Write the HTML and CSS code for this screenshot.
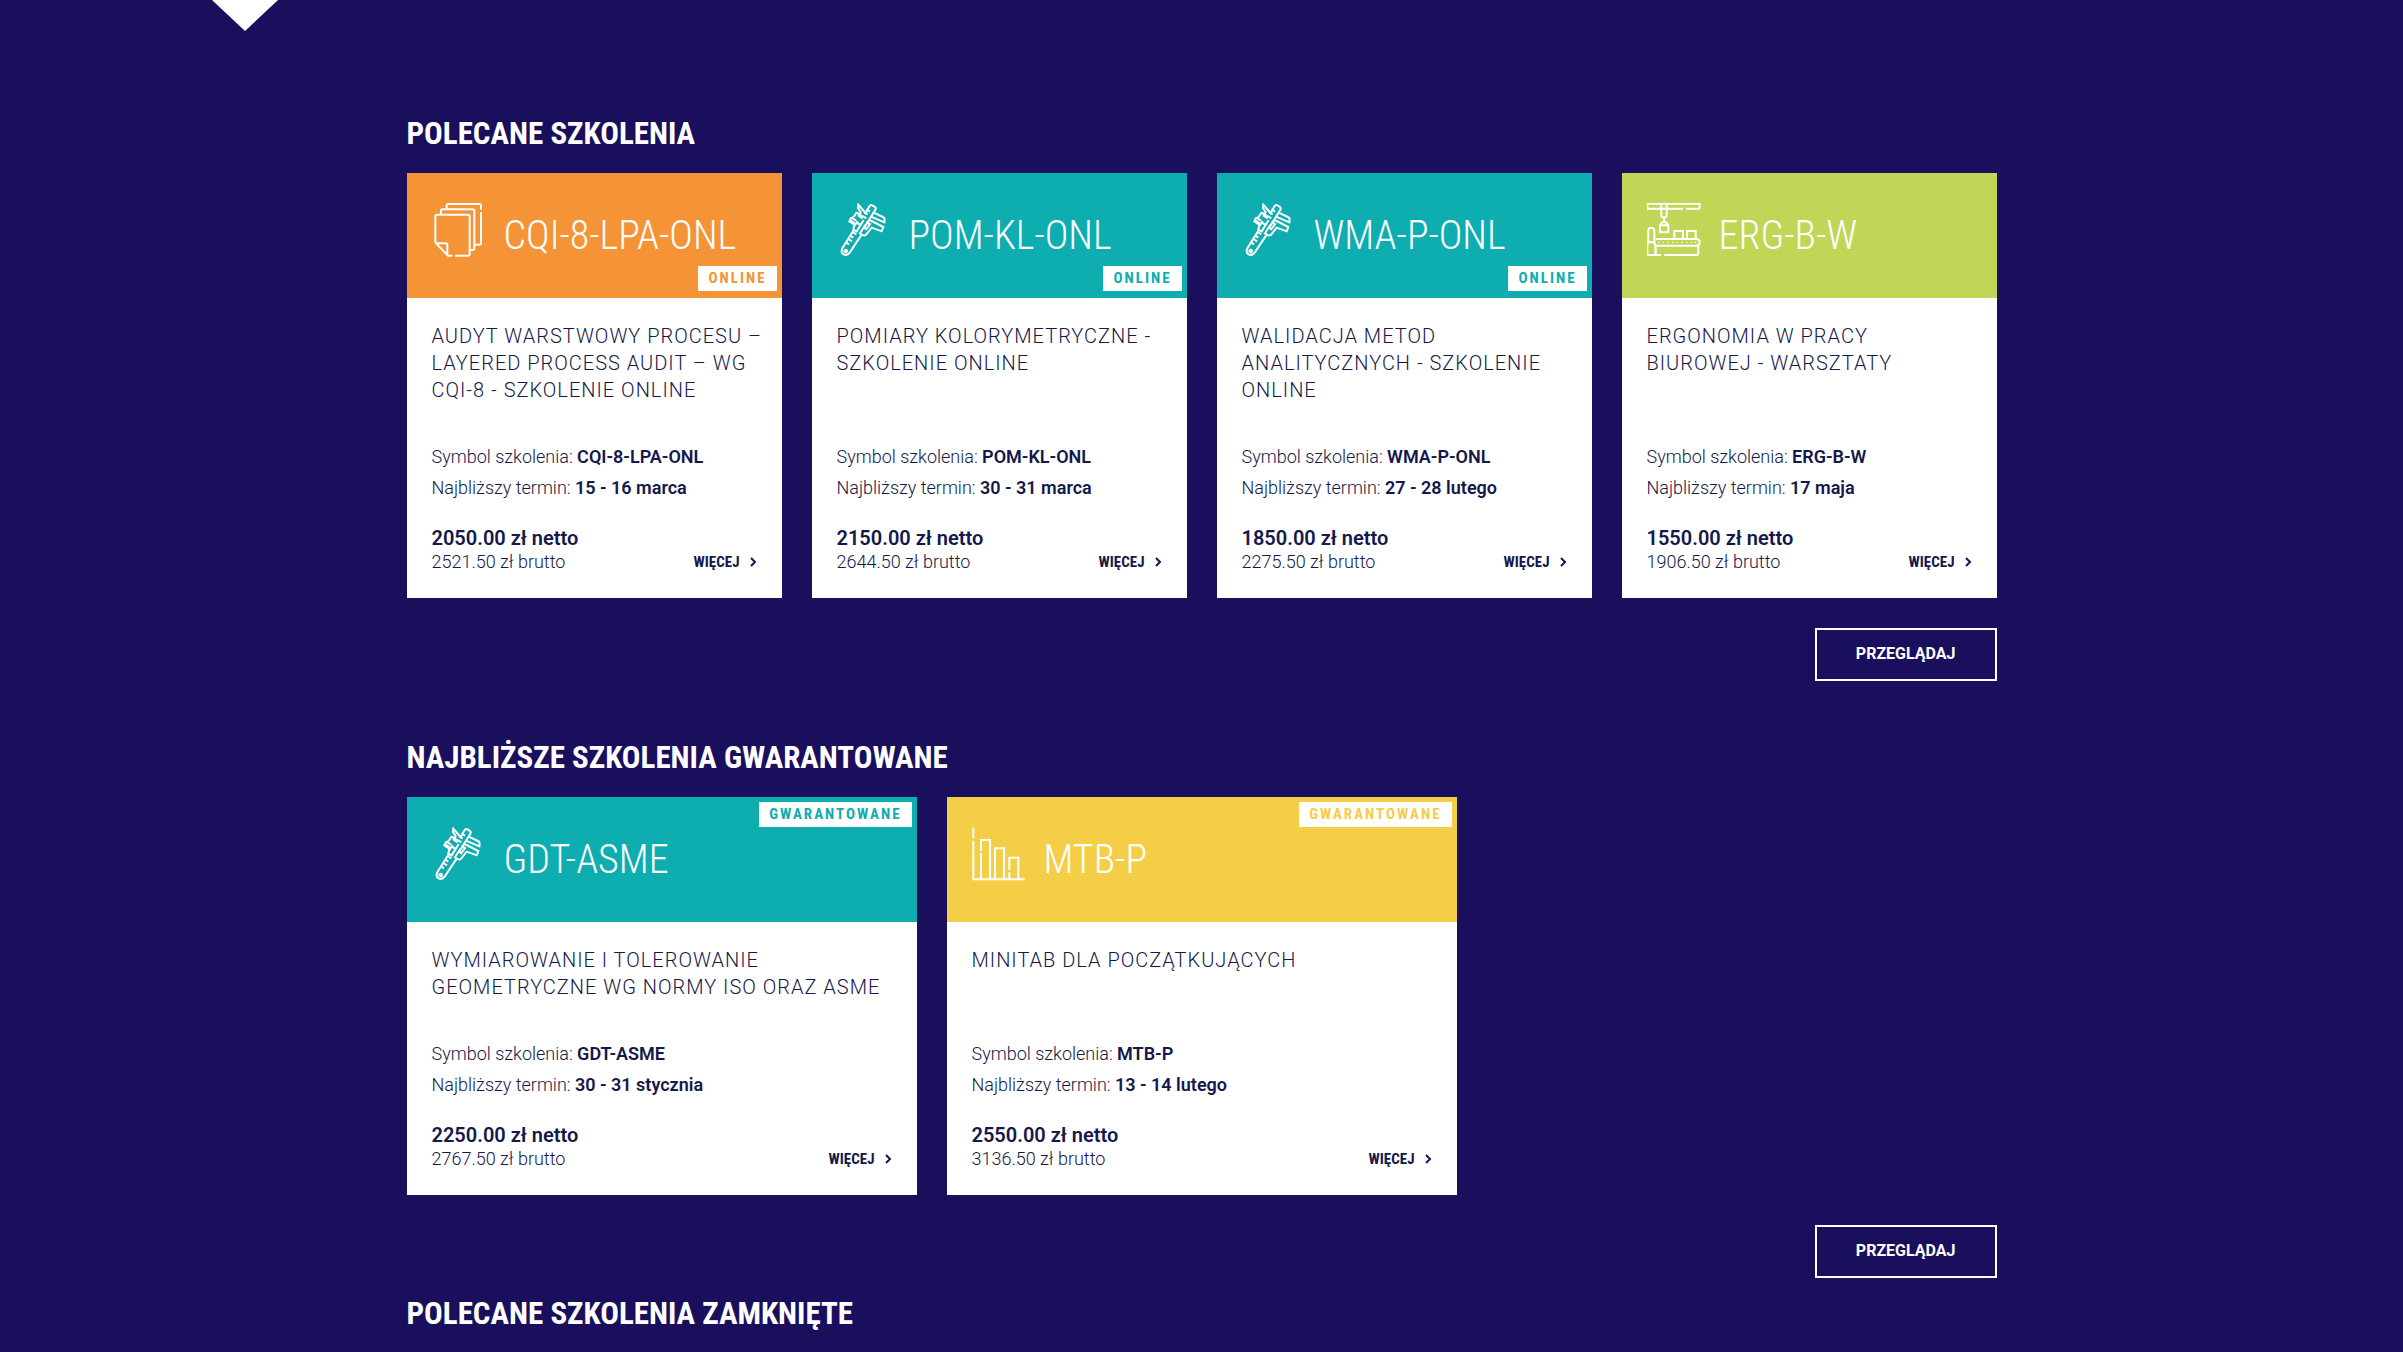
FILE: index.html
```html
<!DOCTYPE html>
<html lang="pl">
<head>
    <meta charset="UTF-8">
    <meta name="viewport" content="width=device-width, initial-scale=1.0">
    <title>Szkolenia</title>
    <link rel="stylesheet" href="styles.css">
</head>
<body>
    <!-- shared icons -->
    <svg class="icon-defs" width="0" height="0" aria-hidden="true">
        <symbol id="icon-pages" viewBox="36 39 162 162">
            <path d="M46 158V79q0-5 5-5h93q5 0 5 5v113q0 5-5 5h-39M97 197H84L46 158M48 160h29q5 0 5 5v28"/>
            <path d="M63 72v-9q0-5 5-5h90q5 0 5 5v112q0 5-5 5h-7M80 55v-8q0-5 5-5h93q5 0 5 5v12M183 66v93q0 5-5 5h-13"/>
        </symbol>
        <symbol id="icon-caliper" viewBox="21 39 162 162">
            <path d="M70 122L37 175q-6 12 4 18 10 5 18-5L95 134M105 72L119 48q3-5 8-2l8 5q4 3 1 8l-34 55"/>
            <circle cx="47" cy="183" r="4"/>
            <path d="M68 126l11 7M61 137l9 6M55 147l11 7M48 157l9 6M109 58l11 7M103 67l10 6M98 78l11 7"/>
            <path d="M104 66L85 44l-1 10 8 13-6 10 12 8M80 67l-9 14M79 67l19 13M71 82l-8 2-5 10 17 11 8-12M66 84l12 8M62 92l12 8"/>
            <path d="M73 104l-3 15 10 5 21-34M90 104l-10-6M131 68l28 13q5 2 5 8l-1 8-40-17M116 90l9 3 35 18-5 13-30-11-16 20q-5 6-11 2l-8-5 16-26"/>
            <path d="M109 96l11 6-13 18M100 112l7 4"/>
        </symbol>
        <symbol id="icon-line" viewBox="50 39 162 162">
            <path d="M158 56H53q-2 0-2-2V43q0-2 2-2h153q2 0 2 2v11q0 2-2 2h-40M93 43v35q0 4 4 4h8q4 0 4-4V43M101 83v13M89 127v-22l6-8h12l7 8v22zM89 106h25"/>
            <path d="M132 145v-22h26v22M170 145v-22h26v22M76 147h121q11 0 11 10t-11 10H76M76 167v28M204 168v23q0 4-4 4h-98M92 195H54q-3 0-3-3v-27q0-9 12-9t12 9v30M54 157v-35q0-9 9-9t9 9v37"/>
            <path class="dots" d="M83 157h4M97 157h4M111 157h4M125 157h4M139 157h4M153 157h4M167 157h4M181 157h4M193 157h4"/>
        </symbol>
        <symbol id="icon-chart" viewBox="48 51 162 162">
            <path d="M52 53v32M52 92v116h154M75 122V90h27v117M75 128v79M117 207v-92h27v92M160 180v-37h27v64M160 187v20"/>
        </symbol>
        <symbol id="icon-chevron" viewBox="0 0 8 12">
            <path d="M2 2l4 4-4 4"/>
        </symbol>
    </svg>

    <svg class="pointer" viewBox="0 0 66 31" aria-hidden="true"><path d="M0 0h66L33 31z"/></svg>

    <main class="container">
        <section class="trainings">
            <h2>Polecane szkolenia</h2>
            <div class="cards cards-four">
                <article class="card orange">
                    <div class="card-top">
                        <svg class="icon" aria-hidden="true"><use href="#icon-pages"/></svg>
                        <span class="code">CQI-8-LPA-ONL</span>
                        <span class="badge badge-bottom">Online</span>
                    </div>
                    <div class="card-body">
                        <h3>Audyt warstwowy procesu – Layered Process Audit – wg CQI-8 - szkolenie online</h3>
                        <div class="details">
                            <p>Symbol szkolenia: <strong>CQI-8-LPA-ONL</strong></p>
                            <p>Najbliższy termin: <strong>15 - 16 marca</strong></p>
                        </div>
                        <div class="card-bottom">
                            <div class="price"><strong>2050.00 zł netto</strong><span>2521.50 zł brutto</span></div>
                            <a class="more" href="#">Więcej <svg class="chevron" aria-hidden="true"><use href="#icon-chevron"/></svg></a>
                        </div>
                    </div>
                </article>
                <article class="card teal">
                    <div class="card-top">
                        <svg class="icon" aria-hidden="true"><use href="#icon-caliper"/></svg>
                        <span class="code">POM-KL-ONL</span>
                        <span class="badge badge-bottom">Online</span>
                    </div>
                    <div class="card-body">
                        <h3>Pomiary kolorymetryczne - szkolenie online</h3>
                        <div class="details">
                            <p>Symbol szkolenia: <strong>POM-KL-ONL</strong></p>
                            <p>Najbliższy termin: <strong>30 - 31 marca</strong></p>
                        </div>
                        <div class="card-bottom">
                            <div class="price"><strong>2150.00 zł netto</strong><span>2644.50 zł brutto</span></div>
                            <a class="more" href="#">Więcej <svg class="chevron" aria-hidden="true"><use href="#icon-chevron"/></svg></a>
                        </div>
                    </div>
                </article>
                <article class="card teal">
                    <div class="card-top">
                        <svg class="icon" aria-hidden="true"><use href="#icon-caliper"/></svg>
                        <span class="code">WMA-P-ONL</span>
                        <span class="badge badge-bottom">Online</span>
                    </div>
                    <div class="card-body">
                        <h3>Walidacja metod analitycznych - szkolenie online</h3>
                        <div class="details">
                            <p>Symbol szkolenia: <strong>WMA-P-ONL</strong></p>
                            <p>Najbliższy termin: <strong>27 - 28 lutego</strong></p>
                        </div>
                        <div class="card-bottom">
                            <div class="price"><strong>1850.00 zł netto</strong><span>2275.50 zł brutto</span></div>
                            <a class="more" href="#">Więcej <svg class="chevron" aria-hidden="true"><use href="#icon-chevron"/></svg></a>
                        </div>
                    </div>
                </article>
                <article class="card green">
                    <div class="card-top">
                        <svg class="icon" aria-hidden="true"><use href="#icon-line"/></svg>
                        <span class="code">ERG-B-W</span>
                    </div>
                    <div class="card-body">
                        <h3>Ergonomia w pracy biurowej&nbsp;- warsztaty</h3>
                        <div class="details">
                            <p>Symbol szkolenia: <strong>ERG-B-W</strong></p>
                            <p>Najbliższy termin: <strong>17 maja</strong></p>
                        </div>
                        <div class="card-bottom">
                            <div class="price"><strong>1550.00 zł netto</strong><span>1906.50 zł brutto</span></div>
                            <a class="more" href="#">Więcej <svg class="chevron" aria-hidden="true"><use href="#icon-chevron"/></svg></a>
                        </div>
                    </div>
                </article>
            </div>
            <button type="button" class="browse">Przeglądaj</button>
        </section>

        <section class="trainings guaranteed">
            <h2>Najbliższe szkolenia gwarantowane</h2>
            <div class="cards cards-three">
                <article class="card teal">
                    <div class="card-top">
                        <svg class="icon" aria-hidden="true"><use href="#icon-caliper"/></svg>
                        <span class="code">GDT-ASME</span>
                        <span class="badge badge-top">Gwarantowane</span>
                    </div>
                    <div class="card-body">
                        <h3>Wymiarowanie i tolerowanie geometryczne wg normy ISO oraz ASME</h3>
                        <div class="details">
                            <p>Symbol szkolenia: <strong>GDT-ASME</strong></p>
                            <p>Najbliższy termin: <strong>30 - 31 stycznia</strong></p>
                        </div>
                        <div class="card-bottom">
                            <div class="price"><strong>2250.00 zł netto</strong><span>2767.50 zł brutto</span></div>
                            <a class="more" href="#">Więcej <svg class="chevron" aria-hidden="true"><use href="#icon-chevron"/></svg></a>
                        </div>
                    </div>
                </article>
                <article class="card yellow">
                    <div class="card-top">
                        <svg class="icon" aria-hidden="true"><use href="#icon-chart"/></svg>
                        <span class="code">MTB-P</span>
                        <span class="badge badge-top">Gwarantowane</span>
                    </div>
                    <div class="card-body">
                        <h3>Minitab dla początkujących</h3>
                        <div class="details">
                            <p>Symbol szkolenia: <strong>MTB-P</strong></p>
                            <p>Najbliższy termin: <strong>13 - 14 lutego</strong></p>
                        </div>
                        <div class="card-bottom">
                            <div class="price"><strong>2550.00 zł netto</strong><span>3136.50 zł brutto</span></div>
                            <a class="more" href="#">Więcej <svg class="chevron" aria-hidden="true"><use href="#icon-chevron"/></svg></a>
                        </div>
                    </div>
                </article>
            </div>
            <button type="button" class="browse">Przeglądaj</button>
        </section>

        <section class="trainings closed">
            <h2>Polecane szkolenia zamknięte</h2>
        </section>
    </main>
</body>
</html>
```
FILE: styles.css
```css
* {
    box-sizing: border-box;
}

body {
    margin: 0;
    background-color: #190f5d;
    color: #14184a;
    font-family: Roboto, Arial, sans-serif;
    font-size: 18px;
}

h2,
.code,
.badge,
.more {
    font-family: "Roboto Condensed", "Liberation Sans Narrow", Roboto, sans-serif;
}

.icon-defs {
    position: absolute;
}

.pointer {
    display: block;
    width: 66px;
    height: 31px;
    margin-left: 212px;
    fill: #fff;
}

.container {
    max-width: 1590px;
    margin: 0 auto;
    padding-top: 83px;
}

.trainings {
    display: flex;
    flex-direction: column;
}

.guaranteed {
    margin-top: 57px;
}

.closed {
    margin-top: 16px;
}

h2 {
    margin: 0 0 19px;
    color: #fff;
    font-size: 31px;
    line-height: 40px;
    font-weight: 700;
    text-transform: uppercase;
}

.cards {
    display: grid;
    gap: 30px;
}

.cards-four {
    grid-template-columns: repeat(4, 1fr);
}

.cards-three {
    grid-template-columns: repeat(3, 1fr);
}

.card {
    display: flex;
    flex-direction: column;
    background-color: #fff;
}

.card-top {
    position: relative;
    display: flex;
    gap: 18px;
    padding: 30px 25px;
    background-color: currentColor;
}

.orange .card-top { color: #f59337; }
.teal .card-top { color: #0eadb0; }
.green .card-top { color: #c1d557; }
.yellow .card-top { color: #f4ce47; }

.icon {
    width: 54px;
    height: 54px;
    fill: none;
    stroke: #fff;
    stroke-width: 6;
}

.dots {
    stroke-width: 4;
}

.code {
    color: #fff;
    font-size: 40px;
    line-height: 65px;
    font-weight: 300;
}

.badge {
    position: absolute;
    right: 5px;
    padding: 0 10px;
    background-color: #fff;
    font-size: 15px;
    line-height: 25px;
    font-weight: 700;
    letter-spacing: 2px;
    text-transform: uppercase;
}

.badge-top {
    top: 5px;
}

.badge-bottom {
    bottom: 7px;
}

.card-body {
    flex: 1;
    display: flex;
    flex-direction: column;
    padding: 25px 18px 24px 25px;
}

h3 {
    margin: 0 0 37px;
    font-size: 20px;
    line-height: 27px;
    font-weight: 350;
    letter-spacing: 1px;
    text-transform: uppercase;
}

.details {
    margin-top: auto;
    font-weight: 350;
}

.details p {
    margin: 0;
    line-height: 31px;
}

.details strong {
    font-weight: 600;
}

.card-bottom {
    display: flex;
    justify-content: space-between;
    align-items: flex-end;
    margin-top: 23px;
    padding-right: 7px;
}

.price {
    display: flex;
    flex-direction: column;
    line-height: 24px;
    font-weight: 350;
}

.price strong {
    font-size: 20px;
    font-weight: 600;
}

.more {
    display: flex;
    align-items: center;
    gap: 9px;
    color: inherit;
    font-size: 15px;
    line-height: 24px;
    font-weight: 700;
    text-decoration: none;
    text-transform: uppercase;
}

.chevron {
    width: 8px;
    height: 12px;
    fill: none;
    stroke: currentColor;
    stroke-width: 2;
}

.browse {
    align-self: flex-end;
    margin-top: 30px;
    padding: 0 39px 1px;
    border: 2px solid #fff;
    background: none;
    color: #fff;
    font-family: inherit;
    font-size: 16px;
    line-height: 48px;
    font-weight: 700;
    text-transform: uppercase;
    cursor: pointer;
}
```
